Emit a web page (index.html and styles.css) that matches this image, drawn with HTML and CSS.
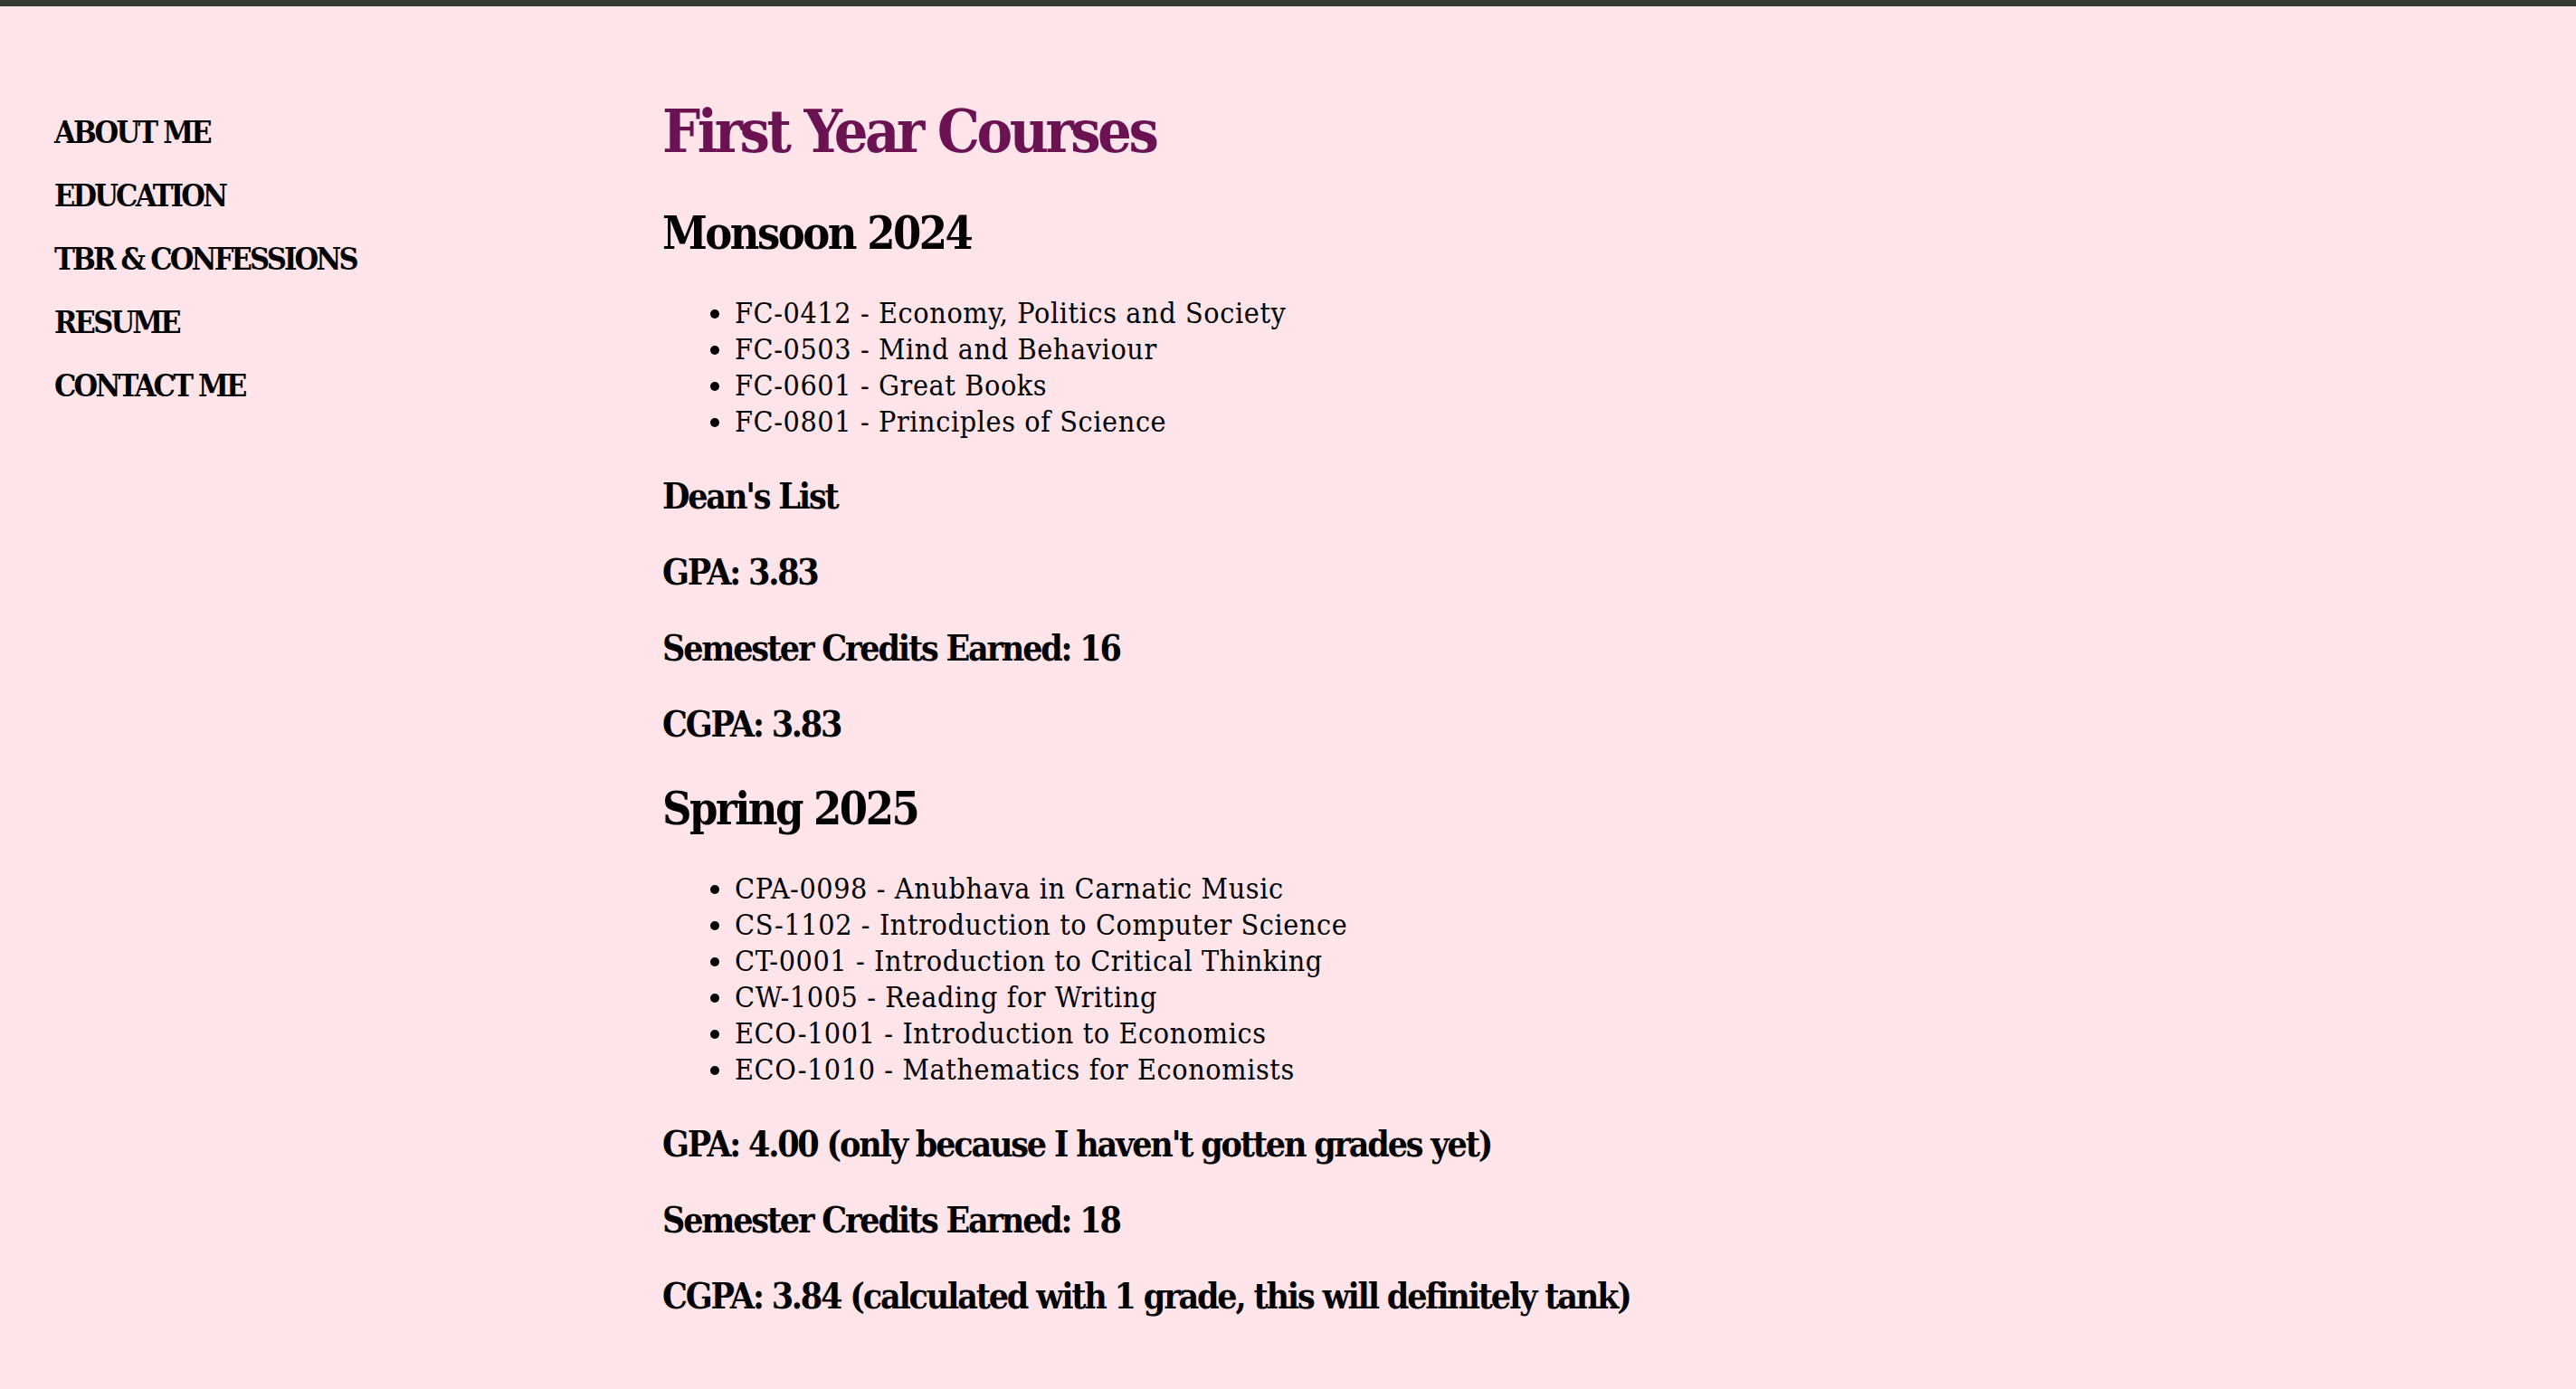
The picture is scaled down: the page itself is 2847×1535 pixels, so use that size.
FILE: index.html
```html
<!DOCTYPE html>
<html lang="en">
<head>
<meta charset="utf-8">
<title>First Year Courses</title>
<link rel="stylesheet" href="styles.css">
</head>
<body>
<div class="topbar"></div>
<div class="layout">
  <nav class="sidenav">
    <ul class="navlist">
      <li><a class="navlink" href="#">ABOUT ME</a></li>
      <li><a class="navlink" href="#">EDUCATION</a></li>
      <li><a class="navlink" href="#">TBR &amp; CONFESSIONS</a></li>
      <li><a class="navlink" href="#">RESUME</a></li>
      <li><a class="navlink" href="#">CONTACT ME</a></li>
    </ul>
  </nav>
  <main class="content">
    <h1 class="page-title">First Year Courses</h1>
    <h2 class="term">Monsoon 2024</h2>
    <ul class="courses">
      <li>FC-0412 - Economy, Politics and Society</li>
      <li>FC-0503 - Mind and Behaviour</li>
      <li>FC-0601 - Great Books</li>
      <li>FC-0801 - Principles of Science</li>
    </ul>
    <p class="stat">Dean's List</p>
    <p class="stat">GPA: 3.83</p>
    <p class="stat">Semester Credits Earned: 16</p>
    <p class="stat">CGPA: 3.83</p>
    <h2 class="term">Spring 2025</h2>
    <ul class="courses">
      <li>CPA-0098 - Anubhava in Carnatic Music</li>
      <li>CS-1102 - Introduction to Computer Science</li>
      <li>CT-0001 - Introduction to Critical Thinking</li>
      <li>CW-1005 - Reading for Writing</li>
      <li>ECO-1001 - Introduction to Economics</li>
      <li>ECO-1010 - Mathematics for Economists</li>
    </ul>
    <p class="stat">GPA: 4.00 (only because I haven't gotten grades yet)</p>
    <p class="stat">Semester Credits Earned: 18</p>
    <p class="stat">CGPA: 3.84 (calculated with 1 grade, this will definitely tank)</p>
  </main>
</div>
</body>
</html>
```
FILE: styles.css
```css
html, body {
  margin: 0;
  padding: 0;
}
body {
  background: #ffe4e9;
  color: #000;
  font-family: "DejaVu Serif", "Liberation Serif", serif;
  font-stretch: condensed;
}
.topbar {
  height: 7px;
  background: #343c2f;
}
.layout {
  display: grid;
  grid-template-columns: 732px 1fr;
  min-height: 1528px;
}
.sidenav {
  padding: 104px 0 0 60px;
}
.navlist {
  list-style: none;
  margin: 0;
  padding: 0;
}
.navlist li {
  font-size: 34px;
  line-height: 70px;
  font-weight: bold;
  letter-spacing: -2.8px;
}
.navlink {
  color: #000;
  text-decoration: none;
}
.content {
  padding-top: 97px;
}
.page-title {
  margin: 0 0 42px;
  font-size: 66px;
  line-height: 82px;
  font-weight: bold;
  letter-spacing: -3.5px;
  color: #6a1252;
}
.term {
  margin: 40px 0 38px;
  font-size: 50px;
  line-height: 60px;
  font-weight: bold;
  letter-spacing: -2.5px;
}
.page-title + .term {
  margin-top: 0;
}
.courses {
  margin: 0 0 38px;
  padding-left: 80px;
}
.courses li {
  font-size: 32px;
  line-height: 40px;
  letter-spacing: 0.6px;
}
.stat {
  margin: 0 0 36px;
  font-size: 39px;
  line-height: 48px;
  font-weight: bold;
  letter-spacing: -2.2px;
}
```
